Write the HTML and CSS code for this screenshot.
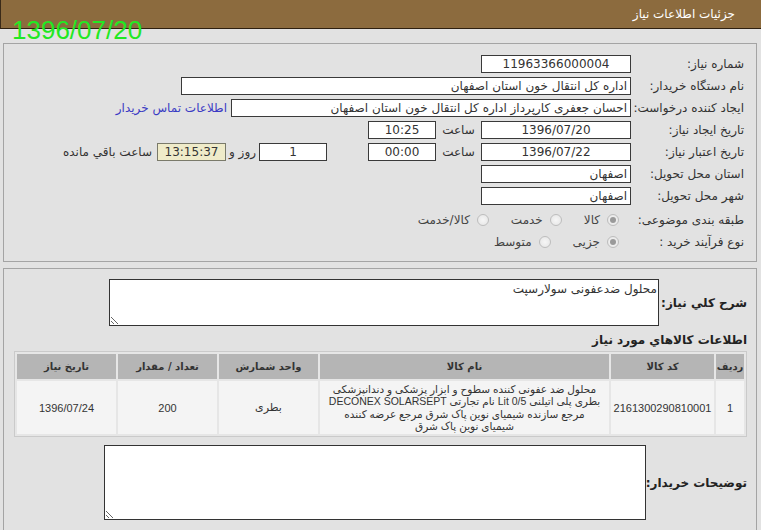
FILE: index.html
```html
<!DOCTYPE html>
<html lang="fa" dir="rtl">
<head>
<meta charset="utf-8">
<title>جزئیات اطلاعات نیاز</title>
<link rel="stylesheet" href="styles.css">
</head>
<body>
<div class="topbar"><span class="title">جزئیات اطلاعات نیاز</span></div>
<div class="stamp">1396/07/20</div>

<div class="panel p1">
  <div class="row"><div class="lbl">شماره نیاز:</div><div class="fld"><span class="box w150 c">11963366000004</span></div></div>
  <div class="row"><div class="lbl">نام دستگاه خریدار:</div><div class="fld"><span class="box w450">اداره کل انتقال خون استان اصفهان</span></div></div>
  <div class="row"><div class="lbl">ایجاد کننده درخواست:</div><div class="fld"><span class="box w400">احسان جعفری کارپرداز اداره کل انتقال خون استان اصفهان</span><a class="link" href="#">اطلاعات تماس خریدار</a></div></div>
  <div class="row"><div class="lbl">تاریخ ایجاد نیاز:</div><div class="fld"><span class="box w150 c">1396/07/20</span><span class="mid w45">ساعت</span><span class="box w68 c">10:25</span></div></div>
  <div class="row"><div class="lbl">تاریخ اعتبار نیاز:</div><div class="fld"><span class="box w150 c">1396/07/22</span><span class="mid w45">ساعت</span><span class="box w68 c">00:00</span><span class="sp41"></span><span class="box w68 c">1</span><span class="mid w33">روز و</span><span class="box w69 c remain">13:15:37</span><span class="after">ساعت باقي مانده</span></div></div>
  <div class="row"><div class="lbl">استان محل تحویل:</div><div class="fld"><span class="box w150">اصفهان</span></div></div>
  <div class="row"><div class="lbl">شهر محل تحویل:</div><div class="fld"><span class="box w150">اصفهان</span></div></div>
  <div class="row rrow first"><div class="lbl">طبقه بندی موضوعی:</div><div class="fld opts"><span class="opt"><span class="radio on"></span>کالا</span><span class="opt"><span class="radio"></span>خدمت</span><span class="opt"><span class="radio"></span>کالا/خدمت</span></div></div>
  <div class="row rrow"><div class="lbl">نوع فرآیند خرید :</div><div class="fld opts"><span class="opt"><span class="radio on"></span>جزیی</span><span class="opt"><span class="radio"></span>متوسط</span></div></div>
</div>

<div class="panel p2">
  <div class="trow tr1"><div class="tlbl">شرح کلي نياز:</div><textarea class="ta ta1" readonly>محلول ضدعفونی سولارسپت</textarea></div>
  <div class="heading">اطلاعات کالاهاي مورد نياز</div>
  <table class="goods">
    <colgroup><col class="c1"><col class="c2"><col class="c3"><col class="c4"><col class="c5"><col class="c6"></colgroup>
    <thead>
      <tr><th>ردیف</th><th>کد کالا</th><th>نام کالا</th><th>واحد شمارش</th><th>تعداد / مقدار</th><th>تاریخ نیاز</th></tr>
    </thead>
    <tbody>
      <tr><td>1</td><td>2161300290810001</td><td class="name">محلول ضد عفونی کننده سطوح و ابزار پزشکی و دندانپزشکی<br>بطری پلی اتیلنی 0/5 Lit نام تجارتی DECONEX SOLARSEPT<br>مرجع سازنده شیمیای نوین پاک شرق مرجع عرضه کننده<br>شیمیای نوین پاک شرق</td><td>بطری</td><td>200</td><td>1396/07/24</td></tr>
    </tbody>
  </table>
  <div class="trow tr2"><div class="tlbl">توضیحات خریدار:</div><textarea class="ta ta2" readonly></textarea></div>
</div>
</body>
</html>
```

FILE: styles.css
```css
html, body {
  margin: 0;
  padding: 0;
}
body {
  direction: rtl;
  background: #e2e2e2;
  font-family: "DejaVu Sans", "Liberation Sans", sans-serif;
  font-size: 11px;
  color: #333;
  width: 761px;
  height: 530px;
  overflow: hidden;
  position: relative;
}
.topbar {
  height: 28px;
  background: #8c6b3e;
  border-bottom: 1px solid #2e2010;
  border-left: 1px solid #3a2a18;
  display: flex;
  align-items: center;
  padding-right: 26px;
}
.title {
  color: #fff;
  font-size: 12px;
}
.stamp {
  position: absolute;
  left: 12px;
  top: 15px;
  direction: ltr;
  font-family: "Liberation Sans", sans-serif;
  font-size: 26px;
  color: #22e822;
  line-height: 30px;
}
.panel {
  border: 1px solid #a4a4a4;
  background: #e2e2e2;
}
.p1 {
  margin: 14px 4px 0 3px;
  height: 208px;
  padding-top: 9px;
}
.row {
  display: flex;
  height: 22px;
  align-items: center;
}
.rrow.first {
  margin-top: 2px;
}
.lbl {
  width: 113px;
  padding-right: 12px;
  flex: none;
  font-size: 12px;
  white-space: nowrap;
  color: #333;
}
.fld {
  display: flex;
  align-items: center;
}
.box {
  display: inline-block;
  box-sizing: border-box;
  height: 18px;
  border: 1px solid #3a3a3a;
  background: #fff;
  font-size: 12px;
  line-height: 16px;
  padding: 0 3px;
  white-space: nowrap;
  overflow: hidden;
  color: #333;
}
.box.c { text-align: center; }
.w150 { width: 150px; }
.w450 { width: 450px; }
.w400 { width: 400px; }
.w68 { width: 68px; }
.w69 { width: 69px; }
.mid {
  display: inline-block;
  text-align: center;
  font-size: 12px;
}
.w45 { width: 45px; }
.w33 { width: 33px; }
.sp41 { width: 41px; }
.remain {
  background: #efebc9;
  border-color: #7a7a6a;
}
.after {
  margin-right: 5px;
  font-size: 12px;
  white-space: nowrap;
}
.link {
  color: #3b3bc4;
  text-decoration: none;
  margin-right: 4px;
  font-size: 12px;
  white-space: nowrap;
}
.opts {
  padding-right: 12px;
}
.opt {
  display: inline-flex;
  align-items: center;
  gap: 7px;
  margin-left: 22px;
  font-size: 12px;
  color: #444;
}
.radio {
  width: 10px;
  height: 10px;
  border-radius: 50%;
  border: 1px solid #bdbdbd;
  background: radial-gradient(circle, #f6f6f6 0, #e4e4e4 100%);
  position: relative;
}
.radio.on::after {
  content: "";
  position: absolute;
  left: 2px;
  top: 2px;
  width: 6px;
  height: 6px;
  border-radius: 50%;
  background: #9a9a9a;
}
.p2 {
  margin: 6px 4px 0 3px;
  height: 300px;
  padding-top: 10px;
  padding-right: 9px;
}
.trow {
  display: flex;
  align-items: center;
  justify-content: space-between;
}
.tlbl {
  font-size: 12px;
  font-weight: bold;
  color: #222;
  white-space: nowrap;
}
.ta {
  box-sizing: border-box;
  border: 1px solid #333;
  background: #fff;
  font-family: "DejaVu Sans", sans-serif;
  font-size: 12px;
  color: #333;
  direction: rtl;
  padding: 2px 1px;
  margin: 0;
  resize: both;
  outline: none;
  flex: none;
}
.ta1 {
  width: 550px;
  height: 47px;
  margin-left: 105px;
}
.ta2 {
  width: 542px;
  height: 75px;
  margin-left: 102px;
}
.heading {
  font-size: 12px;
  font-weight: bold;
  color: #222;
  margin-top: 6px;
  line-height: 16px;
}
.goods {
  margin: 3px 0 0 8px;
  width: 732px;
  table-layout: fixed;
  border-collapse: separate;
  border-spacing: 2px;
  border: 1px solid #cacaca;
  background: #e6e6e6;
}
.c1 { width: 28px; }
.c2 { width: 103px; }
.c3 { width: 289px; }
.c4 { width: 99px; }
.c5 { width: 99px; }
.c6 { width: 99px; }
.goods th {
  background: #b5b5b5;
  height: 25px;
  padding: 0;
  font-size: 10px;
  font-weight: bold;
  color: #333;
  white-space: nowrap;
}
.goods td {
  background: #f4f4f4;
  height: 53px;
  padding: 0 2px;
  text-align: center;
  font-family: "Liberation Sans", "DejaVu Sans", sans-serif;
  font-size: 11px;
  color: #333;
}
.goods td.name {
  line-height: 12.5px;
  font-size: 10.5px;
  white-space: nowrap;
}
.tr2 {
  margin-top: 8px;
}
```
